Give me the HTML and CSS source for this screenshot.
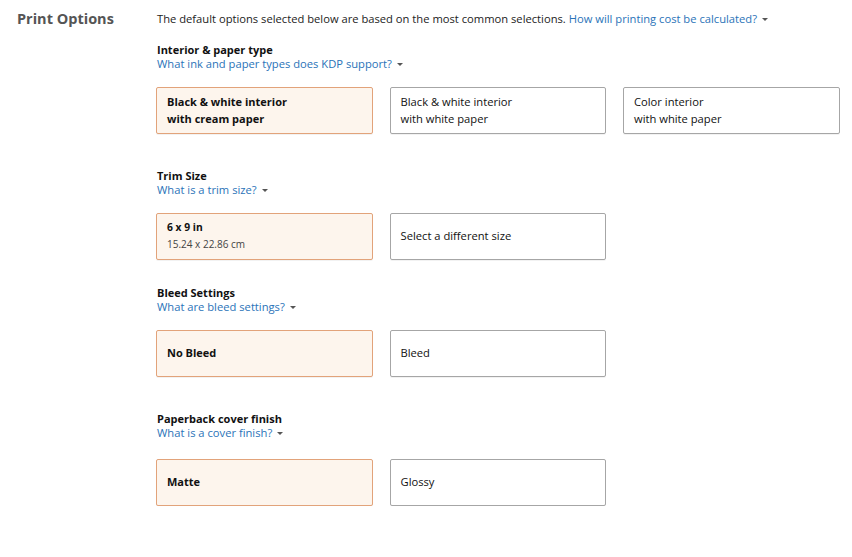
FILE: index.html
```html
<!DOCTYPE html>
<html>
<head>
<meta charset="utf-8">
<link rel="stylesheet" href="styles.css">
</head>
<body>
<div class="page">
  <div class="side"><h2 class="title">Print Options</h2></div>
  <div class="main">
    <p class="intro">The default options selected below are based on the most common selections. <a class="link" href="#">How will printing cost be calculated?<span class="caret"></span></a></p>

    <section class="group g1">
      <div class="label">Interior &amp; paper type</div>
      <a class="link" href="#">What ink and paper types does KDP support?<span class="caret"></span></a>
      <div class="cards">
        <div class="card selected"><span>Black &amp; white interior<br>with cream paper</span></div>
        <div class="card"><span>Black &amp; white interior<br>with white paper</span></div>
        <div class="card"><span>Color interior<br>with white paper</span></div>
      </div>
    </section>

    <section class="group g2">
      <div class="label">Trim Size</div>
      <a class="link" href="#">What is a trim size?<span class="caret"></span></a>
      <div class="cards">
        <div class="card selected trim"><span class="trim-main">6 x 9 in</span><span class="trim-sub">15.24 x 22.86 cm</span></div>
        <div class="card"><span>Select a different size</span></div>
      </div>
    </section>

    <section class="group g3">
      <div class="label">Bleed Settings</div>
      <a class="link" href="#">What are bleed settings?<span class="caret"></span></a>
      <div class="cards">
        <div class="card selected"><span>No Bleed</span></div>
        <div class="card"><span>Bleed</span></div>
      </div>
    </section>

    <section class="group g4">
      <div class="label">Paperback cover finish</div>
      <a class="link" href="#">What is a cover finish?<span class="caret"></span></a>
      <div class="cards">
        <div class="card selected"><span>Matte</span></div>
        <div class="card"><span>Glossy</span></div>
      </div>
    </section>
  </div>
</div>
</body>
</html>
```
FILE: styles.css
```css
* { box-sizing: border-box; }
body {
  margin: 0;
  background: #fff;
  font-family: "Open Sans", "Noto Sans", Arial, sans-serif;
  font-size: 11.2px;
  color: #111;
}
.page {
  display: flex;
  padding-top: 9px;
}
.side {
  width: 156px;
  padding-left: 17px;
  flex: none;
}
.title {
  margin: 0;
  font-size: 14.5px;
  font-weight: 700;
  color: #555;
  line-height: 20px;
}
.main {
  flex: 1;
  padding-left: 1px;
}
.intro {
  margin: 0;
  line-height: 20px;
  color: #222;
}
.link {
  color: #2a73b8;
  text-decoration: none;
}
.caret {
  display: inline-block;
  width: 0;
  height: 0;
  margin-left: 5px;
  vertical-align: 2px;
  border-left: 3px solid transparent;
  border-right: 3px solid transparent;
  border-top: 3px solid #555;
}
.group {
  display: flex;
  flex-direction: column;
  align-items: flex-start;
}
.g1 { margin-top: 14px; }
.g2 { margin-top: 35px; }
.g3 { margin-top: 26px; }
.g4 { margin-top: 35px; }
.label {
  font-weight: 700;
  font-size: 11px;
  line-height: 14px;
  color: #111;
}
.group .link { line-height: 14px; }
.cards {
  display: flex;
  gap: 17px;
  margin-top: 16px;
  margin-left: -1px;
}
.g4 .cards { margin-top: 19px; }
.card {
  width: 216.5px;
  height: 47px;
  border: 1px solid #a6a6a6;
  border-radius: 2px;
  background: #fff;
  display: flex;
  flex-direction: column;
  justify-content: center;
  padding: 0 10px 2px;
  line-height: 17px;
  color: #111;
  box-shadow: 0 1px 0 rgba(0,0,0,0.05);
}
.card.selected {
  background: #fdf5ed;
  border-color: #e2a37a;
  font-weight: 700;
  font-size: 11px;
}
.trim .trim-main { font-size: 10.3px; line-height: 17px; }
.trim .trim-sub { font-size: 10px; font-weight: 400; color: #444; line-height: 17px; }
```
